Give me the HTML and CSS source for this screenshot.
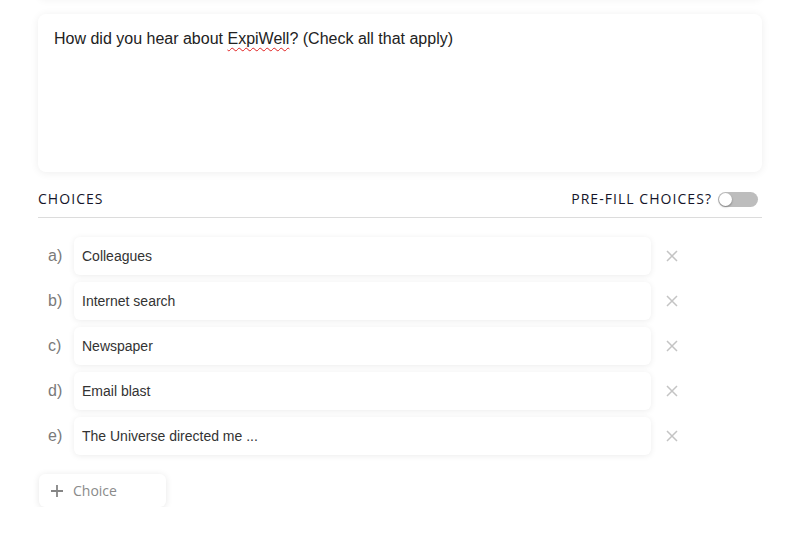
FILE: index.html
```html
<!DOCTYPE html>
<html>
<head>
<meta charset="utf-8">
<link rel="stylesheet" href="styles.css">
</head>
<body>
<div class="page">
  <div class="prev-card"></div>
  <div class="question-card">
    <p class="question">How did you hear about <span class="misspelled">ExpiWell</span>? (Check all that apply)</p>
  </div>
  <div class="choices-header">
    <span class="section-title">CHOICES</span>
    <div class="prefill">
      <span class="section-title">PRE-FILL CHOICES?</span>
      <span class="toggle"><span class="knob"></span></span>
    </div>
  </div>
  <ul class="choice-list">
    <li class="choice-row"><span class="choice-label">a)</span><div class="choice-input">Colleagues</div><span class="remove"><svg viewBox="0 0 12 12" width="12" height="12"><path d="M1 1L11 11M11 1L1 11" stroke="#c4c4c4" stroke-width="1.5" fill="none"/></svg></span></li>
    <li class="choice-row"><span class="choice-label">b)</span><div class="choice-input">Internet search</div><span class="remove"><svg viewBox="0 0 12 12" width="12" height="12"><path d="M1 1L11 11M11 1L1 11" stroke="#c4c4c4" stroke-width="1.5" fill="none"/></svg></span></li>
    <li class="choice-row"><span class="choice-label">c)</span><div class="choice-input">Newspaper</div><span class="remove"><svg viewBox="0 0 12 12" width="12" height="12"><path d="M1 1L11 11M11 1L1 11" stroke="#c4c4c4" stroke-width="1.5" fill="none"/></svg></span></li>
    <li class="choice-row"><span class="choice-label">d)</span><div class="choice-input">Email blast</div><span class="remove"><svg viewBox="0 0 12 12" width="12" height="12"><path d="M1 1L11 11M11 1L1 11" stroke="#c4c4c4" stroke-width="1.5" fill="none"/></svg></span></li>
    <li class="choice-row"><span class="choice-label">e)</span><div class="choice-input">The Universe directed me ...</div><span class="remove"><svg viewBox="0 0 12 12" width="12" height="12"><path d="M1 1L11 11M11 1L1 11" stroke="#c4c4c4" stroke-width="1.5" fill="none"/></svg></span></li>
  </ul>
  <button class="add-choice"><svg viewBox="0 0 12 12" width="12" height="12"><path d="M6 0V12M0 6H12" stroke="#858585" stroke-width="1.8" fill="none"/></svg><span>Choice</span></button>
</div>
</body>
</html>
```

FILE: styles.css
```css
* { box-sizing: border-box; }
html, body {
  margin: 0;
  padding: 0;
  background: #ffffff;
}
body {
  font-family: "Liberation Sans", Arial, sans-serif;
  overflow: hidden;
}
.page {
  width: 724px;
  margin-left: 38px;
}
.prev-card {
  height: 30px;
  margin-top: -31px;
  border-radius: 8px;
  background: #fff;
  box-shadow: 0 1px 8px rgba(0, 0, 0, 0.05);
}
.question-card {
  margin-top: 15px;
  height: 158px;
  border-radius: 8px;
  background: #fff;
  box-shadow: 0 1px 8px rgba(0, 0, 0, 0.07);
  padding: 16px 16px;
}
.question {
  margin: 0;
  font-size: 16px;
  line-height: 18px;
  color: #222222;
}
.misspelled {
  text-decoration: underline wavy #e02020;
  text-decoration-thickness: 1px;
  text-underline-offset: 3px;
  text-decoration-skip-ink: none;
}
.choices-header {
  margin-top: 16px;
  display: flex;
  justify-content: space-between;
  align-items: flex-start;
  height: 30px;
  padding-top: 1px;
  border-bottom: 1px solid #dcdcdc;
  padding-right: 4px;
}
.section-title {
  font-family: "Open Sans", sans-serif;
  font-size: 14px;
  letter-spacing: 1.05px;
  color: #15152a;
  line-height: 20px;
}
.prefill {
  display: flex;
  align-items: center;
  gap: 6px;
}
.toggle {
  position: relative;
  width: 40px;
  height: 15px;
  border-radius: 8px;
  background: #bdbdbd;
  display: inline-block;
  margin-top: 1px;
}
.knob {
  position: absolute;
  left: 1px;
  top: 1px;
  width: 13px;
  height: 13px;
  border-radius: 50%;
  background: #fff;
  box-shadow: 0 1px 2px rgba(0, 0, 0, 0.35);
}
.choice-list {
  list-style: none;
  margin: 19px 0 0 0;
  padding: 0;
  display: flex;
  flex-direction: column;
  gap: 7px;
}
.choice-row {
  display: flex;
  align-items: center;
  height: 38px;
}
.choice-label {
  width: 36px;
  padding-left: 10px;
  font-size: 16px;
  color: #7a7a7a;
}
.choice-input {
  width: 577px;
  height: 38px;
  border-radius: 6px;
  background: #fff;
  box-shadow: 0 1px 6px rgba(0, 0, 0, 0.08);
  padding-left: 8px;
  display: flex;
  align-items: center;
  font-size: 14px;
  color: #333333;
}
.remove {
  margin-left: 15px;
  display: flex;
  align-items: center;
}
.add-choice {
  margin-top: 19px;
  margin-left: 1px;
  width: 127px;
  height: 33px;
  border: none;
  border-radius: 6px;
  background: #fff;
  box-shadow: 0 1px 7px rgba(0, 0, 0, 0.1);
  display: flex;
  align-items: center;
  gap: 10px;
  padding: 0 0 0 12px;
  font-family: "Open Sans", sans-serif;
  font-size: 14px;
  color: #8a8a8a;
}
```
